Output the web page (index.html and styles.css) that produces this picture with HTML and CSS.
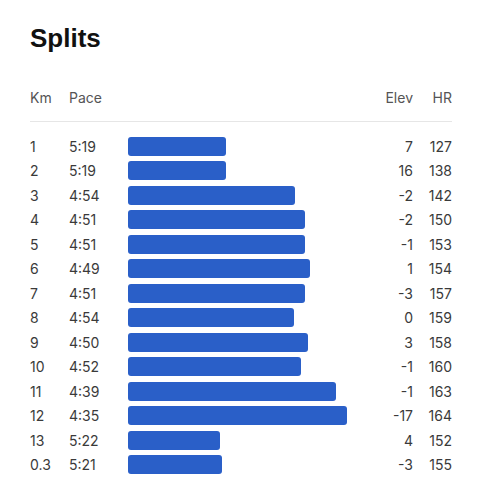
FILE: index.html
```html
<!DOCTYPE html>
<html>
<head>
    <title>Splits</title>
    <link rel="stylesheet" href="styles.css">
</head>
<body>
    <div class="splits">
        <h1 class="splits-title">Splits</h1>

        <div class="split-row split-head">
            <div>Km</div>
            <div>Pace</div>
            <div></div>
            <div class="num">Elev</div>
            <div class="num">HR</div>
        </div>

        <div class="split-list">
            <div class="split-row">
                <div>1</div><div>5:19</div>
                <div><div class="bar" style="width: 98px"></div></div>
                <div class="num">7</div><div class="num">127</div>
            </div>
            <div class="split-row">
                <div>2</div><div>5:19</div>
                <div><div class="bar" style="width: 98px"></div></div>
                <div class="num">16</div><div class="num">138</div>
            </div>
            <div class="split-row">
                <div>3</div><div>4:54</div>
                <div><div class="bar" style="width: 167px"></div></div>
                <div class="num">-2</div><div class="num">142</div>
            </div>
            <div class="split-row">
                <div>4</div><div>4:51</div>
                <div><div class="bar" style="width: 177px"></div></div>
                <div class="num">-2</div><div class="num">150</div>
            </div>
            <div class="split-row">
                <div>5</div><div>4:51</div>
                <div><div class="bar" style="width: 177px"></div></div>
                <div class="num">-1</div><div class="num">153</div>
            </div>
            <div class="split-row">
                <div>6</div><div>4:49</div>
                <div><div class="bar" style="width: 182px"></div></div>
                <div class="num">1</div><div class="num">154</div>
            </div>
            <div class="split-row">
                <div>7</div><div>4:51</div>
                <div><div class="bar" style="width: 177px"></div></div>
                <div class="num">-3</div><div class="num">157</div>
            </div>
            <div class="split-row">
                <div>8</div><div>4:54</div>
                <div><div class="bar" style="width: 166px"></div></div>
                <div class="num">0</div><div class="num">159</div>
            </div>
            <div class="split-row">
                <div>9</div><div>4:50</div>
                <div><div class="bar" style="width: 180px"></div></div>
                <div class="num">3</div><div class="num">158</div>
            </div>
            <div class="split-row">
                <div>10</div><div>4:52</div>
                <div><div class="bar" style="width: 173px"></div></div>
                <div class="num">-1</div><div class="num">160</div>
            </div>
            <div class="split-row">
                <div>11</div><div>4:39</div>
                <div><div class="bar" style="width: 208px"></div></div>
                <div class="num">-1</div><div class="num">163</div>
            </div>
            <div class="split-row">
                <div>12</div><div>4:35</div>
                <div><div class="bar" style="width: 219px"></div></div>
                <div class="num">-17</div><div class="num">164</div>
            </div>
            <div class="split-row">
                <div>13</div><div>5:22</div>
                <div><div class="bar" style="width: 92px"></div></div>
                <div class="num">4</div><div class="num">152</div>
            </div>
            <div class="split-row">
                <div>0.3</div><div>5:21</div>
                <div><div class="bar" style="width: 94px"></div></div>
                <div class="num">-3</div><div class="num">155</div>
            </div>
        </div>
    </div>
</body>
</html>
```

FILE: styles.css
```css
body {
    margin: 0;
    font-family: Inter, "Noto Sans", sans-serif;
    background-color: #fff;
    color: #3a3a3a;
}

.splits {
    width: 422px;
    padding: 0 30px;
}

.splits-title {
    margin: 23px 0 0;
    font-family: "Liberation Sans", Arial, sans-serif;
    font-size: 26px;
    line-height: 31px;
    font-weight: 700;
    color: #111;
}

.split-row {
    display: grid;
    grid-template-columns: 39px 59px 1fr 50px 39px;
    align-items: center;
    font-size: 14px;
    height: 24.5px;
}

.split-head {
    margin-top: 33px;
    height: 20px;
    padding-bottom: 14px;
    border-bottom: 1px solid #e6e6e6;
    color: #555;
}

.split-list {
    margin-top: 12px;
}

.num {
    text-align: right;
}

.bar {
    height: 19px;
    border-radius: 3px;
    background-color: #2a5fc8;
}
```
